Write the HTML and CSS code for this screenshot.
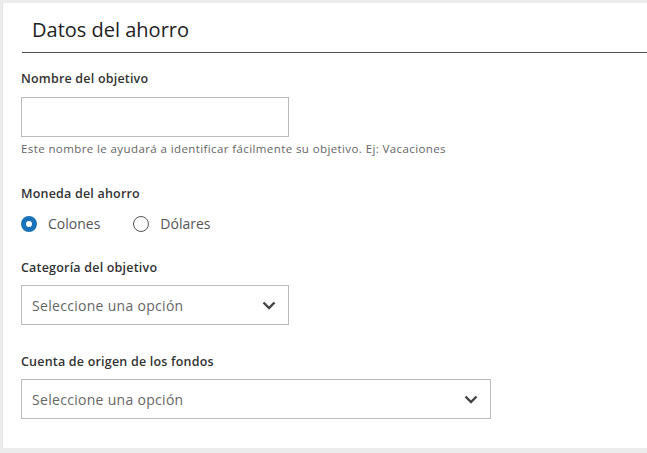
FILE: index.html
```html
<!DOCTYPE html>
<html lang="es">
<head>
<meta charset="utf-8">
<title>Datos del ahorro</title>
<link rel="stylesheet" href="styles.css">
</head>
<body>
<div class="card">
  <h2 class="title">Datos del ahorro</h2>
  <div class="form">
    <div class="field">
      <label class="label">Nombre del objetivo</label>
      <input class="input" type="text">
      <p class="help">Este nombre le ayudará a identificar fácilmente su objetivo. Ej: Vacaciones</p>
    </div>
    <div class="field">
      <span class="label">Moneda del ahorro</span>
      <div class="radios">
        <label class="radio"><span class="dot checked"></span>Colones</label>
        <label class="radio"><span class="dot"></span>Dólares</label>
      </div>
    </div>
    <div class="field tight">
      <span class="label">Categoría del objetivo</span>
      <div class="select short">
        <span>Seleccione una opción</span>
        <svg class="chev" width="14" height="9" viewBox="0 0 14 9"><path d="M1.5 1.5 L7 7 L12.5 1.5" fill="none" stroke="#444" stroke-width="2.4"/></svg>
      </div>
    </div>
    <div class="field last">
      <span class="label">Cuenta de origen de los fondos</span>
      <div class="select long">
        <span>Seleccione una opción</span>
        <svg class="chev" width="14" height="9" viewBox="0 0 14 9"><path d="M1.5 1.5 L7 7 L12.5 1.5" fill="none" stroke="#444" stroke-width="2.4"/></svg>
      </div>
    </div>
  </div>
</div>
</body>
</html>
```
FILE: styles.css
```css
html, body {
  margin: 0;
  padding: 0;
}
body {
  background: #ececec;
  font-family: "Open Sans", "Liberation Sans", sans-serif;
  color: #333;
  height: 453px;
  overflow: hidden;
}
.card {
  background: #fff;
  margin: 3px 0 0 2px;
  height: 445px;
  border-left: 1px solid #e4e4e4;
  box-sizing: border-box;
}
.title {
  margin: 0 0 0 19px;
  padding: 14px 0 0 10px;
  height: 35px;
  border-bottom: 1px solid #555;
  font-weight: 400;
  font-size: 20px;
  color: #222;
  line-height: 26px;
}
.form {
  padding: 18px 0 0 18px;
}
.field {
  display: flex;
  flex-direction: column;
  align-items: flex-start;
}
.label {
  font-size: 12.5px;
  font-weight: 600;
  color: #333;
  line-height: 16px;
  letter-spacing: 0.2px;
}
.input {
  margin-top: 10px;
  width: 268px;
  height: 40px;
  box-sizing: border-box;
  border: 1px solid #bbb;
  border-radius: 0;
}
.help {
  margin: 5px 0 0;
  font-size: 11.5px;
  color: #666;
  line-height: 14px;
  letter-spacing: 0.4px;
}
.field + .field {
  margin-top: 30px;
}
.field + .field.tight {
  margin-top: 28px;
}
.field + .field.last {
  margin-top: 29px;
}
.radios {
  display: flex;
  gap: 33px;
  margin-top: 14px;
}
.radio {
  display: flex;
  align-items: center;
  gap: 11px;
  font-size: 14px;
  color: #555;
  line-height: 16px;
}
.dot {
  width: 16px;
  height: 16px;
  border-radius: 50%;
  border: 1.5px solid #555;
  box-sizing: border-box;
}
.dot.checked {
  border: 5px solid #1a73b8;
  background: #fff;
}
.select {
  margin-top: 9px;
  height: 40px;
  box-sizing: border-box;
  border: 1px solid #bbb;
  display: flex;
  align-items: center;
  justify-content: space-between;
  padding: 0 12px 0 10px;
  font-size: 14px;
  color: #666;
  letter-spacing: 0.3px;
}
.select.short { width: 268px; }
.select.long { width: 470px; }
```
